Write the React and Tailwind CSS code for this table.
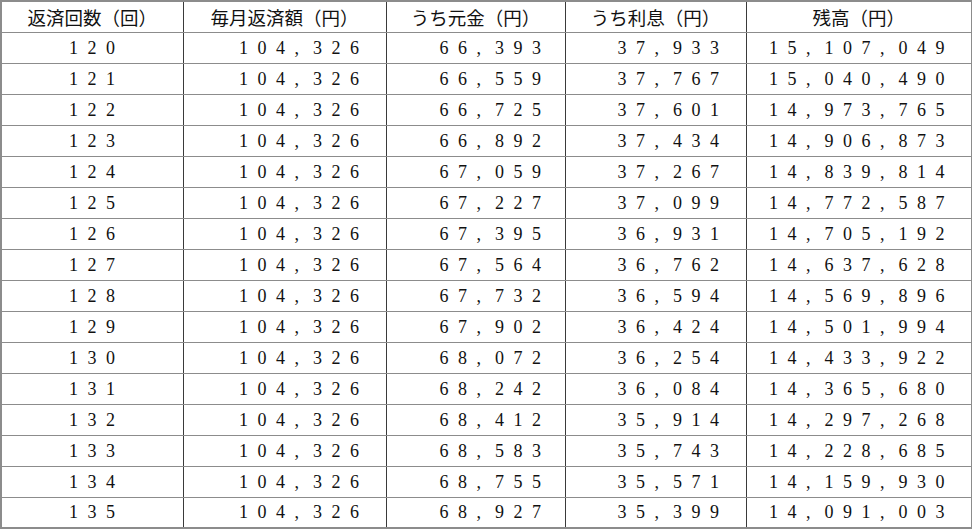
import React from "react";

const rows = [
  ["120", "104,326", "66,393", "37,933", "15,107,049"],
  ["121", "104,326", "66,559", "37,767", "15,040,490"],
  ["122", "104,326", "66,725", "37,601", "14,973,765"],
  ["123", "104,326", "66,892", "37,434", "14,906,873"],
  ["124", "104,326", "67,059", "37,267", "14,839,814"],
  ["125", "104,326", "67,227", "37,099", "14,772,587"],
  ["126", "104,326", "67,395", "36,931", "14,705,192"],
  ["127", "104,326", "67,564", "36,762", "14,637,628"],
  ["128", "104,326", "67,732", "36,594", "14,569,896"],
  ["129", "104,326", "67,902", "36,424", "14,501,994"],
  ["130", "104,326", "68,072", "36,254", "14,433,922"],
  ["131", "104,326", "68,242", "36,084", "14,365,680"],
  ["132", "104,326", "68,412", "35,914", "14,297,268"],
  ["133", "104,326", "68,583", "35,743", "14,228,685"],
  ["134", "104,326", "68,755", "35,571", "14,159,930"],
  ["135", "104,326", "68,927", "35,399", "14,091,003"],
];

const headers = ["返済回数（回）", "毎月返済額（円）", "うち元金（円）", "うち利息（円）", "残高（円）"];

// full-width look: commas get a whole cell like the digits
const Num = ({ value }) =>
  value.split(",").map((part, i) => (
    <React.Fragment key={i}>
      {i > 0 && <span className="tracking-[14px]">,</span>}
      {part}
    </React.Fragment>
  ));

const cell = "border border-[#8c8c8c] border-x-[#3a3a3a] p-0";

export default function App() {
  return (
    <div className="w-[972px] h-[530px] bg-white">
      <table className="table-fixed border-collapse w-[971px] border-2 border-[#8c8c8c] text-black">
        <colgroup>
          <col className="w-[182px]" />
          <col className="w-[203px]" />
          <col className="w-[179px]" />
          <col className="w-[181px]" />
          <col className="w-[226px]" />
        </colgroup>
        <thead>
          <tr className="h-[31px]">
            {headers.map((h) => (
              <th
                key={h}
                className={`${cell} text-center font-normal text-[18.5px] leading-none text-[#111] font-['Noto_Sans_CJK_JP',sans-serif]`}
              >
                {h}
              </th>
            ))}
          </tr>
        </thead>
        <tbody className="font-['Liberation_Serif',serif] text-[18px] leading-none tracking-[9.5px] text-[#111]">
          {rows.map((r) => (
            <tr key={r[0]} className="h-[31px]">
              <td className={`${cell} pl-[9px] text-center`}>{r[0]}</td>
              <td className={`${cell} pr-[17px] text-right`}><Num value={r[1]} /></td>
              <td className={`${cell} pr-[14px] text-right`}><Num value={r[2]} /></td>
              <td className={`${cell} pr-[17px] text-right`}><Num value={r[3]} /></td>
              <td className={`${cell} pr-[17px] text-right`}><Num value={r[4]} /></td>
            </tr>
          ))}
        </tbody>
      </table>
    </div>
  );
}
